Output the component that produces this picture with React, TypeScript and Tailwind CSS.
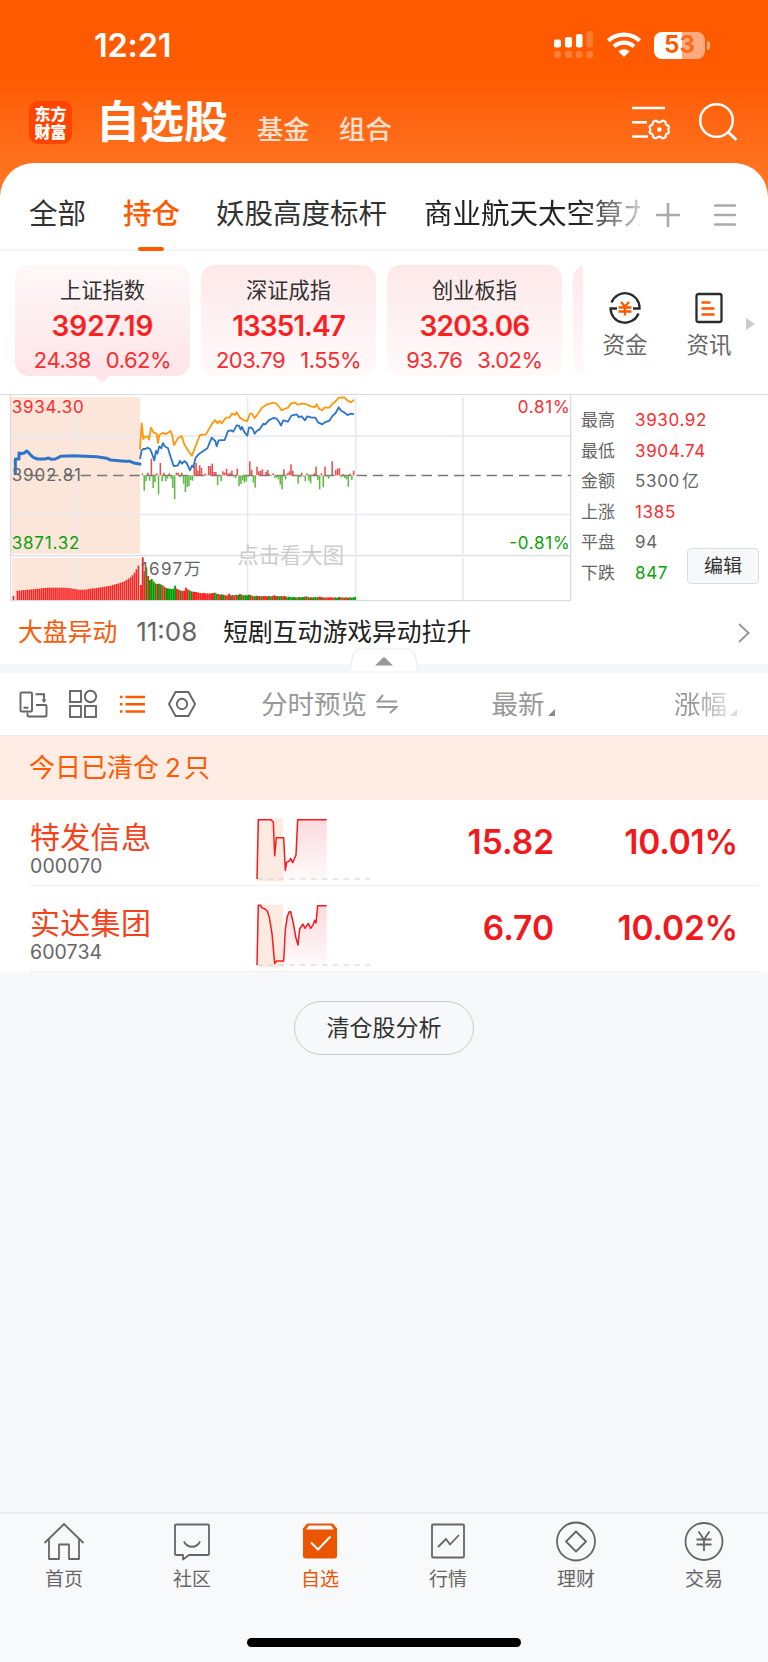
import type { ReactNode } from 'react'

interface IndexQuote { name: string; value: string; change: string; percent: string; tracking: string }
interface Stock { name: string; code: string; price: string; percent: string; line: string; area: string }

const indexes: IndexQuote[] = [
  { name: '上证指数', value: '3927.19', change: '24.38', percent: '0.62%', tracking: 'tracking-normal' },
  { name: '深证成指', value: '13351.47', change: '203.79', percent: '1.55%', tracking: 'tracking-[-1px]' },
  { name: '创业板指', value: '3203.06', change: '93.76', percent: '3.02%', tracking: 'tracking-[-0.8px]' },
]

const stats = [
  { label: '最高', value: '3930.92', color: 'text-[#fb2b2f]' },
  { label: '最低', value: '3904.74', color: 'text-[#fb2b2f]' },
  { label: '金额', value: '5300', unit: '亿', color: 'text-[#666]' },
  { label: '上涨', value: '1385', color: 'text-[#fb2b2f]' },
  { label: '平盘', value: '94', color: 'text-[#666]' },
  { label: '下跌', value: '847', color: 'text-[#0aa10a]' },
]

const stocks: Stock[] = [
  {
    name: '特发信息',
    code: '000070',
    price: '15.82',
    percent: '10.01%',
    line: '771,236 775,58 813,58 820,66 824,166 829,112 851,112 856,210 860,186 868,182 872,174 878,187 888,164 893,58 980,58',
    area: '771,236 775,58 813,58 820,66 824,166 829,112 851,112 856,210 860,186 868,182 872,174 878,187 888,164 893,58 980,58 980,236',
  },
  {
    name: '实达集团',
    code: '600734',
    price: '6.70',
    percent: '10.02%',
    line: '771,236 775,57 782,57 785,64 795,68 802,75 808,93 816,142 824,232 830,224 851,224 856,130 862,90 868,76 872,76 880,110 888,156 894,176 899,128 909,113 915,126 925,111 932,126 940,114 944,102 948,110 953,58 980,58',
    area: '771,236 775,57 782,57 785,64 795,68 802,75 808,93 816,142 824,232 830,224 851,224 856,130 862,90 868,76 872,76 880,110 888,156 894,176 899,128 909,113 915,126 925,111 932,126 940,114 944,102 948,110 953,58 980,58 980,236',
  },
]

const preOpenLine =
  '46,270 46,222 57,222 57,204 66,206 72,204 80,198 86,203 94,212 100,217 112,222 134,222 146,219 152,223 166,222 182,214 220,212 290,215 320,220 332,225 375,229 390,229 405,235 424,238'

const leadLine =
  '30,194 35,115 40,162 46,155 54,154 57,164 63,128 70,142 80,146 84,174 88,150 98,144 108,147 122,138 126,148 132,180 144,160 155,153 163,178 175,198 186,212 195,188 210,150 228,148 245,118 255,105 262,115 268,108 275,115 288,98 298,98 306,86 315,90 320,82 330,98 342,106 352,108 360,86 366,86 374,100 396,68 412,58 430,53 438,55 448,66 455,76 463,72 474,68 483,56 495,52 502,59 518,56 530,58 542,64 555,66 560,58 568,72 577,76 583,68 598,68 610,54 616,50 626,38 643,37 652,46 663,52 672,44'

const priceLine =
  '30,222 35,196 40,192 46,192 52,188 60,192 66,206 73,226 78,198 82,206 88,184 94,190 99,174 104,184 114,190 122,216 131,243 143,242 150,228 156,236 163,228 170,234 180,256 186,242 190,246 197,218 208,206 232,190 245,158 256,168 260,184 266,166 284,165 294,138 302,136 310,140 320,121 327,122 332,134 336,126 344,142 352,152 357,128 363,127 368,132 374,146 380,138 388,134 400,116 406,118 416,106 430,99 440,101 448,112 453,122 460,106 474,110 484,92 500,88 506,96 515,94 525,106 532,94 545,98 556,98 564,112 577,118 583,113 598,107 608,92 617,84 626,67 632,76 645,84 653,90 663,86 672,88'

const deltas = [
  5, -46, -18, 8, -16, 50, -38, -20, 6, -57, 37, -18, 8, -18, -10, 6, -10, -38, -72, 8, 8, -6, 8, -25, -50, -35, -32, -14, -16, 28,
  37, 14, 30, 22, -2, 5, 2, 28, 28, 35, 10, 10, -30, 0, -17, 12, 8, 20, 5, 8, 14, -3, -8, 20, -32, -26, -15, -22, -18, -5,
  42, 16, -22, -37, 26, 12, 14, 18, 0, 10, 16, 4, -3, 6, -8, -7, -12, -28, -42, 18, -12, 6, 12, 33, 14, 0, -2, -25, -6, 8,
  -4, -18, 6, -16, -24, -2, 6, 26, -14, -42, 6, -36, 26, -4, -10, -3, 42, 0, 16, 20, 22, -6, 3, -8, -12, -34, 5, -14, 14,
]

const preVolumes = [
  12, 0, 28, 28, 29, 30, 30, 31, 31, 32, 32, 33, 34, 34, 35, 36, 36, 37, 37, 37, 37, 37, 37, 37, 37, 37, 37, 36, 36, 35, 34, 33, 32, 31, 31, 31,
  31, 32, 33, 34, 35, 35, 36, 37, 38, 39, 40, 41, 42, 43, 45, 47, 48, 50, 52, 54, 56, 60, 64, 68, 74, 82, 92, 103,
]

const volumes = [
  45, 128, 86, 98, 72, 60, 63, 56, 50, 48, 49, 47, 44, 40, 36, 35, 34, 33, 34, 43, 34, 31, 29, 27, 28, 37, 32, 29, 26, 25,
  24, 24, 22, 21, 20, 21, 20, 20, 19, 20, 21, 22, 19, 18, 16, 17, 15, 14, 14, 19, 14, 15, 14, 16, 15, 18, 16, 14, 15, 14,
  16, 15, 12, 11, 13, 12, 12, 11, 12, 12, 11, 12, 11, 12, 14, 12, 12, 11, 12, 11, 12, 9, 10, 9, 8, 9, 8, 8, 9, 8,
  9, 10, 11, 9, 8, 8, 8, 9, 8, 10, 9, 8, 8, 7, 8, 8, 8, 7, 8, 7, 9, 8, 8, 7, 8, 7, 8, 7, 8, 9,
]
const volumeSides =
  'rrrgrggggrggrrggggggrrgrrrrggrrrrrrrrrrrrggrrggrrrgrrrggrggggrrggrrgrrrggrrgrggrrggggggrgggrgrgrgggrrgrrrrrrgggrrgrrgg'

function StatusBar() {
  return (
    <div className="flex h-[90px] items-center pl-[94px] pr-[58px] text-white">
      <span className="mt-[3px] text-[32.500px] font-semibold leading-none tracking-[-0.2px]">12:21</span>
      <svg className="ml-auto" width="40" height="28" viewBox="0 0 40 28" fill="white">
        <rect x="0" y="8.5" width="7" height="8" rx="2" />
        <rect x="11" y="6" width="7" height="10.500" rx="2" />
        <rect x="22" y="3" width="6.500" height="13.500" rx="2" />
        <rect x="32.500" y="0" width="6.500" height="16.500" rx="2" opacity=".2" />
        <g opacity=".22">
          <rect x="0" y="20" width="7" height="7" rx="2" />
          <rect x="11" y="20" width="7" height="7" rx="2" />
          <rect x="22" y="20" width="6.500" height="7" rx="2" />
          <rect x="32.500" y="20" width="6.500" height="7" rx="2" />
        </g>
      </svg>
      <svg className="ml-3" width="36" height="26" viewBox="0 0 36 26" fill="none" stroke="white" strokeWidth="4.200">
        <path d="M2.300 8.700C11 .7 25 .7 33.700 8.700" />
        <path d="M8 14.600C13.500 9.300 22.500 9.300 28 14.600" />
        <path d="M12.500 19.500C15.500 16.400 20.500 16.400 23.500 19.500L18 25Z" fill="white" stroke="none" />
      </svg>
      <div className="ml-3 flex items-center">
        <div className="flex h-[27px] w-[51px] items-center justify-center rounded-[8px] bg-linear-to-r from-white from-54% to-[#ffab80] to-54%">
          <span className="bg-linear-to-r from-[#ff5a00] from-52% to-[#ff6a18] to-52% bg-clip-text text-[24px] font-bold leading-none text-transparent">53</span>
        </div>
        <div className="ml-[2px] h-[9px] w-[3px] rounded-r-full bg-white/50" />
      </div>
    </div>
  )
}

function Header() {
  return (
    <div className="flex h-[73px] items-start pl-[29px] pr-[29px] text-white">
      <div className="mt-[11px] flex size-[43px] flex-col items-center justify-center rounded-[9px] bg-[#ff4400] text-[16px] font-black leading-[18px]">
        <span>东方</span>
        <span>财富</span>
      </div>
      <h1 className="ml-[24px] mt-[10px] text-[44px] font-bold leading-none">自选股</h1>
      <span className="ml-[29px] mt-[27px] text-[26.300px] font-medium leading-none text-white/80">基金</span>
      <span className="ml-[29.500px] mt-[27px] text-[26.300px] font-medium leading-none text-white/80">组合</span>
      <svg className="ml-auto mt-[14px]" width="40" height="38" viewBox="0 0 40 38" fill="none" stroke="white" strokeWidth="2.500">
        <path d="M1 4h33M1 18.300h15M1 32.600h16" />
        <path
          d="M23.800 16.900Q25.500 16.200 26.500 17.800Q28.300 18.900 30.100 17.800Q31.100 16.200 32.800 16.900L34.600 18Q34.300 20.200 35.600 21.200Q38.300 21.500 37.900 23.500Q36.600 25.500 37.900 27.500Q38.300 29.500 35.600 29.800Q34.300 30.800 34.600 33L32.800 34.100Q31.100 34.800 30.100 33.200Q28.300 32.100 26.500 33.200Q25.500 34.800 23.800 34.100L22 33Q22.300 30.800 21 29.800Q18.300 29.500 18.700 27.500Q20 25.500 18.700 23.500Q18.300 21.500 21 21.200Q22.300 20.200 22 18Z"
          strokeLinejoin="round"
          strokeWidth="2.200"
        />
        <circle cx="28.300" cy="25.500" r="2.300" fill="white" stroke="none" />
      </svg>
      <svg className="ml-[28px] mt-[12px]" width="40" height="40" viewBox="0 0 40 40" fill="none" stroke="white" strokeWidth="2.500">
        <circle cx="17.500" cy="18.500" r="16.300" />
        <path d="M28.500 29.500L37.500 38" strokeWidth="2.800" />
      </svg>
    </div>
  )
}

function GroupTabs() {
  return (
    <div className="flex h-[88px] items-center border-b-2 border-[#f5f5f6] pl-[29px] pr-8 pt-[17px] text-[28.500px] leading-none text-[#333]">
      <span className="w-[94px]">全部</span>
      <div className="relative w-[93px] font-medium text-[#ff5a00]">
        持仓
        <div className="absolute -bottom-[22px] left-[15px] h-[4px] w-[26px] rounded-full bg-[#ff5a00]" />
      </div>
      <span className="w-[208px]">妖股高度标杆</span>
      <div className="w-[216px] overflow-hidden whitespace-nowrap bg-linear-to-r from-[#222] from-72% to-[#ccc] bg-clip-text py-1 text-transparent">
        商业航天太空算力
      </div>
      <svg className="ml-[16px]" width="24" height="24" viewBox="0 0 24 24" stroke="#aaa" strokeWidth="2.600">
        <path d="M0 12h24M12 0v24" />
      </svg>
      <svg className="ml-auto" width="22" height="24" viewBox="0 0 22 24" stroke="#aaa" strokeWidth="2.400" strokeLinecap="round">
        <path d="M1 2.500h20M1 12h20M1 21.500h20" />
      </svg>
    </div>
  )
}

function IndexCard({ quote, active }: { quote: IndexQuote; active: boolean }) {
  return (
    <div
      className={`relative flex h-[111px] w-[175px] shrink-0 flex-col items-center rounded-[14px] ${
        active ? 'bg-linear-to-b from-[#fff8f8] to-[#fde5e8]' : 'bg-linear-to-b from-[#fee9ea] to-[#fffafa]'
      }`}
    >
      <span className="mt-[15px] text-[21.300px] leading-none text-[#333]">{quote.name}</span>
      <span className={`mt-[11px] text-[28px] font-semibold leading-none text-[#fb1f22] ${quote.tracking}`}>{quote.value}</span>
      <span className="mt-[9px] flex gap-[15px] text-[22px] leading-none tracking-[-0.5px] text-[#fb2b2f]">
        <span>{quote.change}</span>
        <span>{quote.percent}</span>
      </span>
      {active && (
        <svg className="absolute -bottom-[7px] left-[78px]" width="18" height="8" viewBox="0 0 18 8" fill="#fde5e8">
          <path d="M0 0h18L10 7q-1 1-2 0z" />
        </svg>
      )}
    </div>
  )
}

function IndexStrip() {
  return (
    <div className="flex h-[143px] pt-[14px]">
      <div className="flex w-[583px] gap-[11px] overflow-hidden pl-[15px]">
        {indexes.map((q, i) => (
          <IndexCard key={q.name} quote={q} active={i === 0} />
        ))}
        <div className="h-[111px] w-[175px] shrink-0 rounded-[14px] bg-linear-to-b from-[#fee9ea] to-[#fffafa]" />
      </div>
      <div className="ml-[19px] flex w-[46px] flex-col items-center pt-[26px] text-[22.500px] leading-none text-[#666]">
        <svg width="34" height="34" viewBox="0 0 34 34" fill="none" stroke="#2b2b2b" strokeWidth="2.300">
          <path d="M3.500 11.500A14.500 14.500 0 0 1 31.500 17.500H25" />
          <path d="M30.500 22.500A14.500 14.500 0 0 1 2.500 17.500H9" />
          <path d="M13 11l4 4.500 4-4.500M10.500 16.500h13M10.500 20.500h13M17 15.500v9" stroke="#ff5a00" strokeWidth="2.300" />
        </svg>
        <span className="mt-[9px]">资金</span>
      </div>
      <div className="ml-[38px] flex w-[46px] flex-col items-center pt-[26px] text-[22.500px] leading-none text-[#666]">
        <svg width="34" height="34" viewBox="0 0 34 34" fill="none" stroke="#2b2b2b" strokeWidth="2.300">
          <rect x="4.500" y="3" width="25" height="28" rx="2" />
          <path d="M9.500 11.500h9M9.500 17.500h13M9.500 23.500h13" stroke="#ff5a00" strokeWidth="2.400" />
        </svg>
        <span className="mt-[9px]">资讯</span>
      </div>
      <svg className="ml-[14px] mt-[53px]" width="9" height="12" viewBox="0 0 9 12" fill="#ccc">
        <path d="M0 0l9 6-9 6z" />
      </svg>
    </div>
  )
}

function MinuteChart() {
  return (
    <svg className="ml-[10px] shrink-0" width="562" height="209" viewBox="30 27 1686 627" fontSize="51">
      <path d="M33 36H420V507H33zM36 518H420V645H36z" fill="#fce6da" />
      <path d="M33 153.500H1712M33 388.500H1712" stroke="#e8eaf0" strokeWidth="5" />
      <path d="M226.500 36V507M226.500 518V645M742.500 36V507M742.500 518V645M1067 36V507M1067 518V645M1389 36V507M1389 518V645" stroke="#e8eaf0" strokeWidth="5" />
      <path d="M31.500 28V647M1712 28V647M30 512H1712M30 647H1713" stroke="#d9dbe2" strokeWidth="4" fill="none" />
      <path d="M96 271.500H1712" stroke="#777" strokeWidth="4" strokeDasharray="31 17.700" />
      <polyline points={preOpenLine} fill="none" stroke="#2e75c9" strokeWidth="9" strokeLinejoin="round" />
      {preVolumes.map((h, i) => (
        <rect key={i} x={38 + i * 5.95} y={645 - h} width="4.800" height={h} fill="#fb2222" />
      ))}
      <g transform="translate(390 0)">
        {volumes.map((h, i) => (
          <rect key={i} x={30 + i * 5.4} y={645 - h} width="5.600" height={h} fill={volumeSides[i] === 'r' ? '#fb2222' : '#049c04'} />
        ))}
        {deltas.map((d, i) => (
          <rect key={i} x={35 + i * 5.37} y={d > 0 ? 271 - d : 271} width="4.600" height={Math.abs(d)} fill={d > 0 ? '#ec4a4c' : '#5fba43'} />
        ))}
        <polyline points={leadLine} fill="none" stroke="#ff980f" strokeWidth="5.500" strokeLinejoin="round" />
        <polyline points={priceLine} fill="none" stroke="#2e75c9" strokeWidth="5.500" strokeLinejoin="round" />
      </g>
      <text x="35" y="84" fill="#fb2b2f" textLength="216">3934.30</text>
      <text x="35" y="288" fill="#666" textLength="208">3902.81</text>
      <text x="35" y="492" fill="#0aa10a" textLength="203">3871.32</text>
      <text x="1553" y="84" fill="#fb2b2f" textLength="156">0.81%</text>
      <text x="1528" y="492" fill="#0aa10a" textLength="181">-0.81%</text>
      <text x="422" y="569" fill="#666" textLength="180">1697万</text>
      <text x="712" y="535" fill="#ccc" fontSize="64">点击看大图</text>
    </svg>
  )
}

function MarketPanel() {
  return (
    <div className="flex h-[208px] border-t border-[#d9dbe2]">
      <div className="-mt-px flex">
        <MinuteChart />
      </div>
      <div className="relative flex grow flex-col pl-[9px] pt-[10px] text-[17px] leading-[30.500px] text-[#666]">
        {stats.map((s) => (
          <div key={s.label} className="flex">
            <span className="w-[54px]">{s.label}</span>
            <span className={`tracking-[0.65px] ${s.color}`}>{s.value}</span>
            {s.unit && <span className="ml-[2px]">{s.unit}</span>}
          </div>
        ))}
        <button className="absolute right-[9px] top-[153px] h-[36px] w-[72px] rounded-[4px] border border-[#dcdee4] bg-[#f7f8fa] text-[19px] leading-none text-[#333]">
          编辑
        </button>
      </div>
    </div>
  )
}

function NewsRow() {
  return (
    <div className="relative flex h-[71px] items-center border-b-[9px] border-[#f5f7fa] pl-[18px] pr-[18px] text-[24.800px] leading-none">
      <span className="-mt-[2px] text-[#fa5a0a]">大盘异动</span>
      <span className="-mt-[2px] ml-[19px] w-[87px] text-[26px] text-[#666]">11:08</span>
      <span className="-mt-[2px] text-[#222]">短剧互动游戏异动拉升</span>
      <svg className="ml-auto" width="12" height="20" viewBox="0 0 12 20" fill="none" stroke="#999" strokeWidth="2">
        <path d="M1 1l9.500 9L1 19" />
      </svg>
      <svg className="absolute -bottom-[8px] left-[349px]" width="70" height="24" viewBox="0 0 70 24">
        <path d="M1 23L3.500 9Q5 1 13 1H57Q65 1 66.500 9L69 23" fill="white" stroke="#eff1f4" strokeWidth="1.500" />
        <path d="M26 17.500L33.500 10Q35 8.500 36.500 10L44 17.500z" fill="#999" />
      </svg>
    </div>
  )
}

function ListToolbar() {
  return (
    <div className="flex h-[63px] items-center border-b border-[#eee] pl-[18px] text-[26.500px] leading-none text-[#999]">
      <svg width="32" height="30" viewBox="0 0 32 30" fill="none" stroke="#666" strokeWidth="1.900">
        <rect x="2.500" y="3.500" width="11.500" height="19" rx="1" />
        <path d="M5.500 18.800h5M17.500 5.300h8.500v7M9.500 23.500v3a1 1 0 0 0 1 1h17a1 1 0 0 0 1-1v-9.500a1 1 0 0 0-1-1h-9.500" />
        <path d="M23.500 10.500h5l-2.500 3.500z" fill="#666" stroke="none" />
      </svg>
      <svg className="ml-[18px]" width="30" height="30" viewBox="0 0 30 30" fill="none" stroke="#666" strokeWidth="1.900">
        <rect x="2" y="2" width="11" height="11" />
        <circle cx="22.500" cy="7.500" r="5.700" />
        <rect x="2" y="17" width="11" height="11" />
        <rect x="17" y="17" width="11" height="11" />
      </svg>
      <svg className="ml-[21px]" width="27" height="30" viewBox="0 0 27 30" fill="none" stroke="#ff5a00" strokeWidth="2.500">
        <path d="M1 8h2.500M6.500 8H26M1 15.200h2.500M6.500 15.200H26M1 22.500h2.500M6.500 22.500H26" />
      </svg>
      <svg className="ml-[21px]" width="30" height="30" viewBox="0 0 30 30" fill="none" stroke="#666" strokeWidth="1.900">
        <path d="M8.500 3h13L28 15l-6.500 12h-13L2 15z" strokeLinejoin="round" />
        <circle cx="15" cy="15" r="5.200" />
      </svg>
      <span className="ml-[64px]">分时预览</span>
      <svg className="ml-[9px]" width="22" height="20" viewBox="0 0 22 20" fill="none" stroke="#999" strokeWidth="2">
        <path d="M7 1L1.500 7.500H21M1 13h19.500L14 19" />
      </svg>
      <span className="ml-[93.500px]">最新</span>
      <svg className="ml-[3px] mt-[17px]" width="7" height="7" viewBox="0 0 7 7" fill="#888">
        <path d="M7 0v7H0z" />
      </svg>
      <span className="ml-[119.500px] bg-linear-to-r from-[#999] from-40% to-[#ddd] bg-clip-text text-transparent">涨幅</span>
      <svg className="ml-[3px] mt-[17px]" width="7" height="7" viewBox="0 0 7 7" fill="#ddd">
        <path d="M7 0v7H0z" />
      </svg>
    </div>
  )
}

function StockRow({ stock }: { stock: Stock }) {
  return (
    <div className="bg-white pl-[30px] pr-[10px]">
      <div className="flex h-[86px] items-center border-b-[1.500px] border-[#efefef]">
        <div className="mt-[14px] w-[226px]">
          <div className="text-[30px] leading-[30px] tracking-[0.3px] text-[#f4421a]">{stock.name}</div>
          <div className="mt-[2px] text-[19.500px] leading-[24px] tracking-[0.1px] text-[#666]">{stock.code}</div>
        </div>
        <svg className="mt-[13px]" width="115" height="65" viewBox="768 50 345 195">
          <defs>
            <linearGradient id={`fill-${stock.code}`} x1="0" y1="0" x2="0" y2="1">
              <stop offset="0" stopColor="#fbdadd" />
              <stop offset="1" stopColor="#fffafa" />
            </linearGradient>
          </defs>
          <polygon points={stock.area} fill={`url(#fill-${stock.code})`} />
          <rect x="771" y="55" width="78" height="188" fill="#fdeae0" />
          <path d="M771 236H1110" stroke="#ccd0d6" strokeWidth="3.500" strokeDasharray="16 16.500" />
          <polyline points={stock.line} fill="none" stroke="#f9191e" strokeWidth="4.500" strokeLinejoin="round" />
        </svg>
        <span className="w-[183px] text-right text-[33.500px] font-semibold leading-none text-[#f2191d]">{stock.price}</span>
        <span className="w-[184px] text-right text-[33.500px] font-semibold leading-none tracking-[-0.2px] text-[#f2191d]">{stock.percent}</span>
      </div>
    </div>
  )
}

function NavItem({ label, active, children }: { label: string; active?: boolean; children: ReactNode }) {
  return (
    <div className={`flex flex-col items-center pt-[7px] text-[19px] leading-none ${active ? 'text-[#ec5500]' : 'text-[#666]'}`}>
      <svg width="42" height="42" viewBox="0 0 42 42" fill="none" stroke="currentColor" strokeWidth="1.800" strokeLinejoin="round">
        {children}
      </svg>
      <span className="mt-[7px]">{label}</span>
    </div>
  )
}

function BottomNav() {
  return (
    <div className="h-[150px] border-t-2 border-[#ececef] bg-[#f8f9fb]">
      <div className="grid grid-cols-6">
        <NavItem label="首页">
          <path d="M1.500 22L21 3l19.500 19M6 18v20h10V23.500h10V38h10V18" />
        </NavItem>
        <NavItem label="社区">
          <path d="M5 3.500h32a1 1 0 0 1 1 1V33a1 1 0 0 1-1 1H18l-6 4.500V34H5a1 1 0 0 1-1-1V4.500a1 1 0 0 1 1-1z" />
          <path d="M13 20.500c3.500 7 12.500 7 16 0" />
        </NavItem>
        <NavItem label="自选" active>
          <path d="M9 2.500h24a2 2 0 0 1 1.500.7L38 7.500V35a2.500 2.500 0 0 1-2.500 2.500h-29A2.500 2.500 0 0 1 4 35V7.500l3.500-4.300A2 2 0 0 1 9 2.500z" fill="currentColor" stroke="none" />
          <path d="M10 4.500h22l3 4H7z" fill="#f8f9fb" stroke="none" />
          <path d="M12 21.500l7 7 12.500-13" stroke="#fff" strokeWidth="2" />
        </NavItem>
        <NavItem label="行情">
          <rect x="5" y="3.500" width="32" height="33" rx="1" />
          <path d="M11 26l8-8 4 5.500 9-9.500" />
        </NavItem>
        <NavItem label="理财">
          <circle cx="21" cy="20.500" r="19" />
          <path d="M21 10.500l10 10-10 10-10-10z" />
        </NavItem>
        <NavItem label="交易">
          <circle cx="21" cy="20.500" r="18.500" />
          <path d="M15.500 10.500l5.500 8 5.500-8M13.500 18.500h15M13.500 23.500h15M21 18.500v11.500" />
        </NavItem>
      </div>
      <div className="mx-auto mt-[49px] h-[9px] w-[274px] rounded-full bg-black" />
    </div>
  )
}

export default function App() {
  return (
    <div className="flex h-[1662px] w-[768px] flex-col overflow-hidden bg-[#f7f8fa] font-['Inter','Noto_Sans_CJK_SC',sans-serif]">
      <div className="bg-linear-to-b from-[#ff5a00] from-30% to-[#ff7420] to-70%">
        <StatusBar />
        <Header />
        <div className="rounded-t-[34px] bg-white">
          <GroupTabs />
        </div>
      </div>
      <div className="bg-white">
        <IndexStrip />
        <MarketPanel />
        <NewsRow />
        <ListToolbar />
        <div className="flex h-[64px] items-center bg-[#ffede5] pl-[29px] text-[26px] leading-none text-[#ff5a00]">
          今日已清仓<span className="ml-[6px] mr-[3px]">2</span>只
        </div>
        {stocks.map((s) => (
          <StockRow key={s.code} stock={s} />
        ))}
      </div>
      <button className="mx-auto mt-[29px] h-[54px] w-[180px] rounded-full border-[1.500px] border-[#ccc] text-[23px] leading-none text-[#333]">
        清仓股分析
      </button>
      <div className="mt-auto">
        <BottomNav />
      </div>
    </div>
  )
}
